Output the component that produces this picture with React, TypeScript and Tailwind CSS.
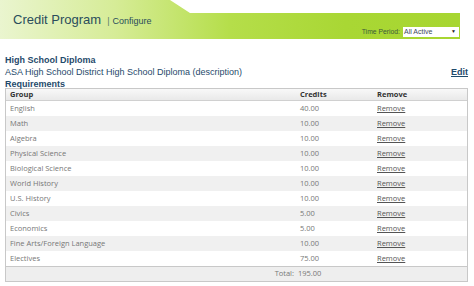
import React from "react";

const rows: [string, string][] = [
  ["English", "40.00"],
  ["Math", "10.00"],
  ["Algebra", "10.00"],
  ["Physical Science", "10.00"],
  ["Biological Science", "10.00"],
  ["World History", "10.00"],
  ["U.S. History", "10.00"],
  ["Civics", "5.00"],
  ["Economics", "5.00"],
  ["Fine Arts/Foreign Language", "10.00"],
  ["Electives", "75.00"],
];

export default function App() {
  return (
    <div className="w-[474px] h-[286px] bg-white overflow-hidden font-['Liberation_Sans',Arial,sans-serif]">
      {/* Header band */}
      <div className="relative w-[460px] h-[39px]">
        <div className="absolute inset-0 bg-[linear-gradient(90deg,#eaf5cf_0%,#d6ec97_25%,#b5de4a_50%,#a9d734_75%,#a7d631_100%)] [clip-path:polygon(0_0,170px_0,190px_13px,460px_13px,460px_39px,0_39px)]" />
        <div className="relative flex h-full justify-between pl-[13px] pr-[1px]">
          <div className="flex items-baseline pt-[12px] text-[#2a4d5c]">
            <span className="text-[13px] leading-[16px]">Credit Program</span>
            <span className="ml-[6px] text-[9px] text-[#5a7a6a]">|</span>
            <span className="ml-[3px] text-[9px]">Configure</span>
          </div>
          <div className="self-end mb-[2px] flex items-center gap-[3px]">
            <span className="text-[6.8px] text-[#3d5a3a]">Time Period:</span>
            <div className="w-[56px] h-[10px] bg-white flex items-center justify-between pl-[1px] pr-[3px]">
              <span className="text-[7px] text-[#3d4a5a] leading-none">All Active</span>
              <span className="text-[5px] text-[#222] leading-none">▼</span>
            </div>
          </div>
        </div>
      </div>

      {/* Title block */}
      <div className="flex justify-between pl-[5px] pr-[6px] pt-[15px] text-[#1f4a6b] text-[9px] leading-[12px]">
        <div>
          <div className="font-bold">High School Diploma</div>
          <div>ASA High School District High School Diploma (description)</div>
          <div className="font-bold">Requirements</div>
        </div>
        <div className="pt-[12px] font-bold underline">Edit</div>
      </div>

      {/* Table */}
      <div className="ml-[5px] mt-[-2px] w-[463px] border border-[#c8c8c8] font-['Open_Sans','Noto_Sans',sans-serif] text-[7.5px]">
        <div className="grid grid-cols-[289px_77px_1fr] h-[12px] items-center bg-[linear-gradient(180deg,#f8f8f8,#e9e9e9)] border-b border-[#d0d0d0] font-bold text-[#333]">
          <div className="pl-[4px]">Group</div>
          <div className="pl-[5px]">Credits</div>
          <div className="pl-[5px]">Remove</div>
        </div>
        {rows.map(([g, c], i) => (
          <div
            key={g}
            className={`grid grid-cols-[289px_77px_1fr] h-[15px] items-center text-[#777] ${i % 2 === 1 ? "bg-[#f0f0f0]" : "bg-white"}`}
          >
            <div className="pl-[4px]">{g}</div>
            <div className="pl-[5px]">{c}</div>
            <div className="pl-[5px]">
              <span className="underline text-[#555]">Remove</span>
            </div>
          </div>
        ))}
        <div className="grid grid-cols-[289px_77px_1fr] h-[15px] items-center bg-[#eeeeee] border-t border-[#c8c8c8] text-[#777]">
          <div className="text-right pr-[1px]">Total:</div>
          <div className="pl-[3px]">195.00</div>
          <div />
        </div>
      </div>
    </div>
  );
}
